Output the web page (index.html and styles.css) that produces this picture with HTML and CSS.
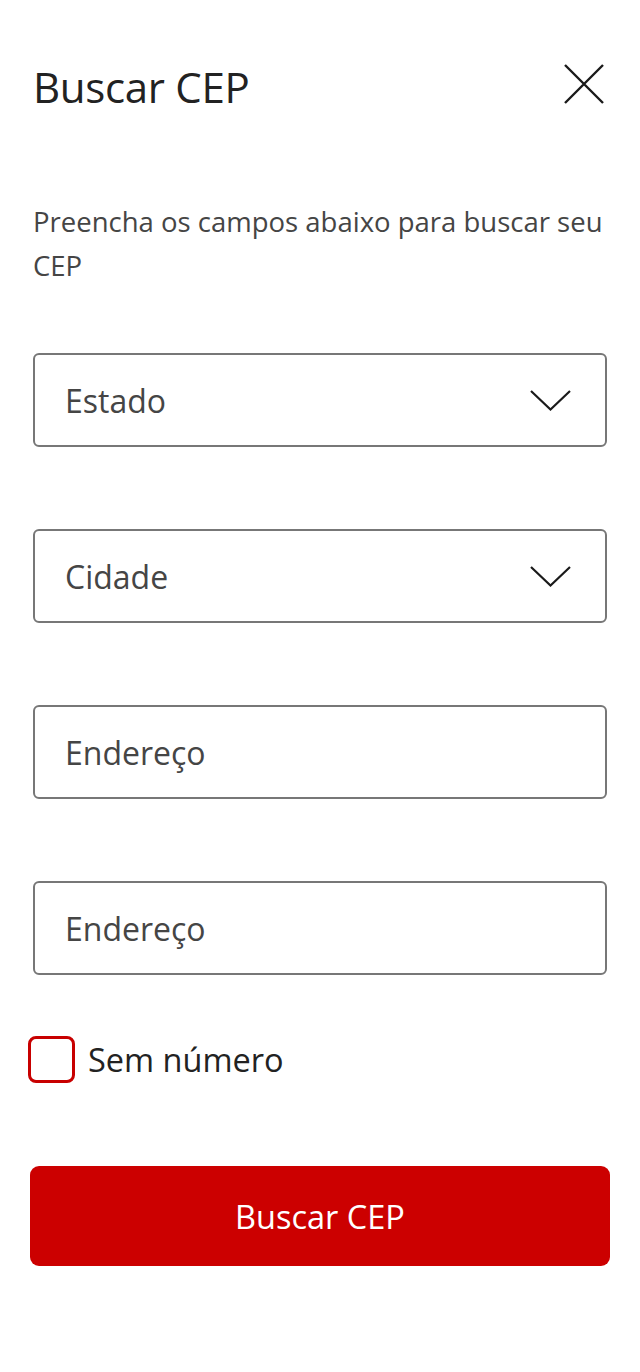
FILE: index.html
```html
<!DOCTYPE html>
<html lang="pt-BR">
<head>
<meta charset="utf-8">
<title>Buscar CEP</title>
<link rel="stylesheet" href="styles.css">
</head>
<body>
<div class="sheet">
  <header class="header">
    <h1 class="title">Buscar CEP</h1>
    <button class="close" aria-label="Fechar">
      <svg width="40" height="40" viewBox="0 0 40 40"><path d="M1 1L39 39M39 1L1 39" stroke="#1a1a1a" stroke-width="2.4" fill="none"/></svg>
    </button>
  </header>
  <p class="subtitle">Preencha os campos abaixo para buscar seu CEP</p>
  <div class="fields">
    <div class="field select"><span class="label">Estado</span>
      <svg class="chev" width="41" height="21" viewBox="0 0 41 21"><path d="M1 1L20.5 19.5L40 1" stroke="#1a1a1a" stroke-width="2.2" fill="none"/></svg>
    </div>
    <div class="field select"><span class="label">Cidade</span>
      <svg class="chev" width="41" height="21" viewBox="0 0 41 21"><path d="M1 1L20.5 19.5L40 1" stroke="#1a1a1a" stroke-width="2.2" fill="none"/></svg>
    </div>
    <div class="field"><span class="label">Endereço</span></div>
    <div class="field"><span class="label">Endereço</span></div>
  </div>
  <label class="check">
    <span class="box"></span>
    <span class="check-text">Sem número</span>
  </label>
  <button class="submit">Buscar CEP</button>
</div>
</body>
</html>
```

FILE: styles.css
```css
* { box-sizing: border-box; }
html, body { margin: 0; padding: 0; background: #fff; }
body { font-family: "Open Sans", "Noto Sans", sans-serif; }
.sheet { width: 640px; padding: 62px 33px 0 33px; }
.header { display: flex; justify-content: space-between; align-items: flex-start; }
.title { margin: 0; font-size: 42px; line-height: 50px; font-weight: 400; color: #222; letter-spacing: -0.3px; }
.close { border: 0; background: none; padding: 0; margin: 2px 3px 0 0; width: 40px; height: 40px; display: block; }
.close svg { display: block; }
.subtitle { margin: 88px 0 0 0; font-size: 27.5px; line-height: 44px; color: #454545; }
.fields { margin-top: 65px; display: flex; flex-direction: column; gap: 82px; }
.field { height: 94px; border: 2px solid #777; border-radius: 6px; display: flex; align-items: center; justify-content: space-between; padding: 0 34px 0 30px; }
.label { font-size: 32px; color: #454545; }
.chev { display: block; }
.check { display: flex; align-items: center; gap: 13px; margin: 61px 0 0 -5px; }
.box { width: 47px; height: 47px; border: 3px solid #c80000; border-radius: 8px; flex: none; }
.check-text { font-size: 32.5px; color: #222; }
.submit { margin: 83px 0 0 -3px; width: 580px; height: 100px; border: 0; border-radius: 9px; background: #cc0000; color: #fff; font-family: "Open Sans", "Noto Sans", sans-serif; font-size: 32.5px; display: block; }
```
